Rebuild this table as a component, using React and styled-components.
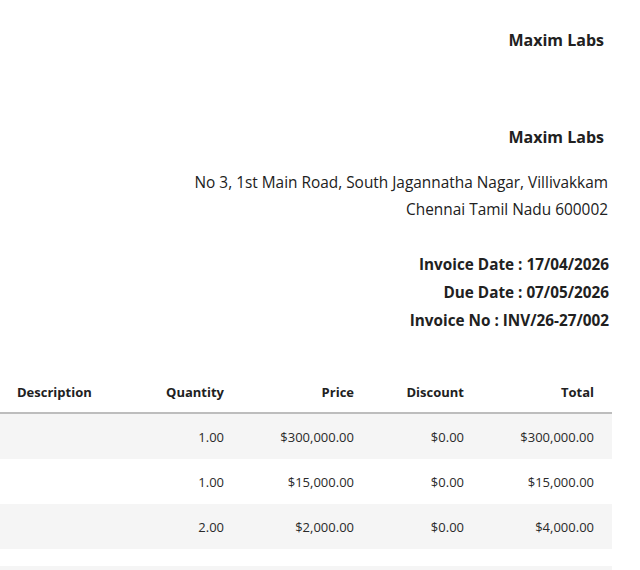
import React from "react";
import styled, { createGlobalStyle } from "styled-components";

const GlobalStyle = createGlobalStyle`
  html, body {
    margin: 0;
    padding: 0;
    background: #ffffff;
    font-family: "Open Sans", "Noto Sans", sans-serif;
    color: #212121;
  }
`

const Page = styled.div`
  width: 612px;
  overflow: hidden;
`

const Company = styled.div`
  text-align: right;
  font-weight: 700;
  font-size: 16px;
  line-height: 20px;
  padding-right: ${props => props.inset}px;
  margin-top: ${props => props.top}px;
`

const Address = styled.div`
  margin-top: 22px;
  padding-right: 4px;
  text-align: right;
  font-size: 15.4px;
  line-height: 27px;
`

const Meta = styled.div`
  margin-top: 27px;
  padding-right: 3px;
  text-align: right;
  font-size: 15.3px;
  font-weight: 700;
  line-height: 28px;
`

const Table = styled.table`
  margin-top: 38px;
  width: 612px;
  border-collapse: collapse;
  table-layout: fixed;
  font-size: 13px;
`

const Th = styled.th`
  height: 40px;
  padding: 0 ${props => props.pad || 17}px 0 17px;
  text-align: ${props => props.align || "right"};
  font-weight: 700;
  border-bottom: 2px solid #bdbdbd;
  vertical-align: middle;
`

const Row = styled.tr`
  background: ${props => props.shade ? "#f5f5f5" : "#ffffff"};
`

const Td = styled.td`
  height: 45px;
  padding: 0 ${props => props.pad || 17}px 0 17px;
  text-align: ${props => props.align || "right"};
  vertical-align: middle;
  color: #2a2a2a;
`

const Footer = styled.div`
  margin-top: 17px;
  height: 20px;
  background: #f5f5f5;
`

const items = [
  { qty: "1.00", price: "$300,000.00", discount: "$0.00", total: "$300,000.00" },
  { qty: "1.00", price: "$15,000.00", discount: "$0.00", total: "$15,000.00" },
  { qty: "2.00", price: "$2,000.00", discount: "$0.00", total: "$4,000.00" },
]

export default function App() {
  return (
    <Page>
      <GlobalStyle />
      <Company top={30} inset={8}>Maxim Labs</Company>
      <Company top={77} inset={8}>Maxim Labs</Company>
      <Address>
        <div>No 3, 1st Main Road, South Jagannatha Nagar, Villivakkam</div>
        <div>Chennai Tamil Nadu 600002</div>
      </Address>
      <Meta>
        <div>Invoice Date : 17/04/2026</div>
        <div>Due Date : 07/05/2026</div>
        <div>Invoice No : INV/26-27/002</div>
      </Meta>
      <Table>
        <colgroup>
          <col style={{ width: 140 }} />
          <col style={{ width: 100 }} />
          <col style={{ width: 131 }} />
          <col style={{ width: 110 }} />
          <col style={{ width: 131 }} />
        </colgroup>
        <thead>
          <tr>
            <Th align="left">Description</Th>
            <Th pad={16}>Quantity</Th>
            <Th>Price</Th>
            <Th>Discount</Th>
            <Th pad={18}>Total</Th>
          </tr>
        </thead>
        <tbody>
          {items.map((item, i) => (
            <Row key={i} shade={i % 2 === 0}>
              <Td align="left"></Td>
              <Td pad={16}>{item.qty}</Td>
              <Td>{item.price}</Td>
              <Td>{item.discount}</Td>
              <Td pad={18}>{item.total}</Td>
            </Row>
          ))}
        </tbody>
      </Table>
      <Footer />
    </Page>
  );
}
